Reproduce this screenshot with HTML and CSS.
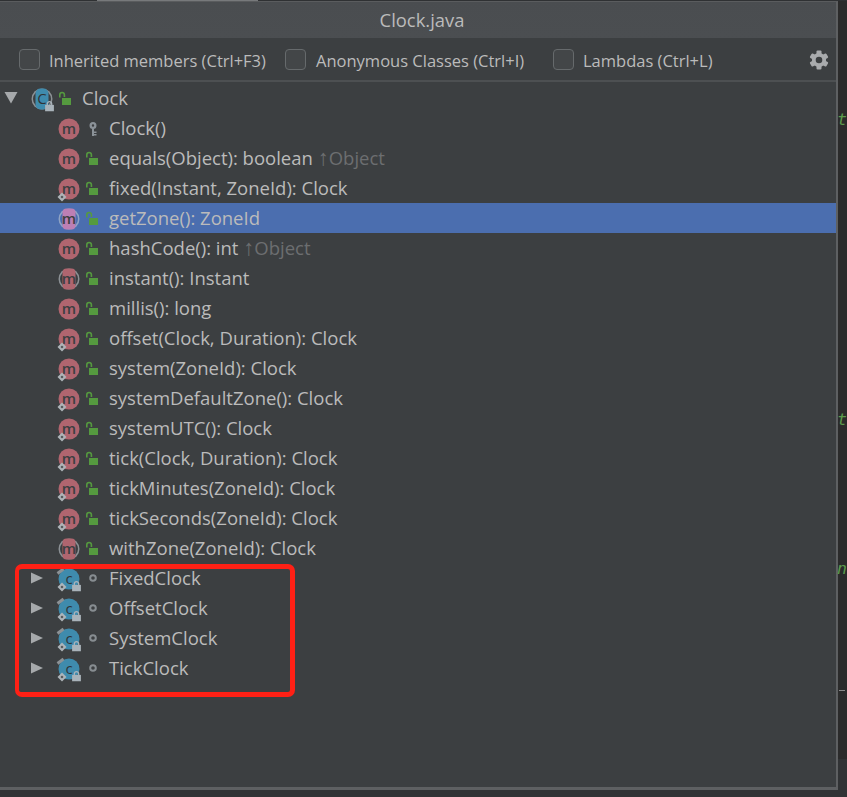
FILE: index.html
```html
<!DOCTYPE html>
<html lang="en">
<head>
<meta charset="utf-8">
<title>Clock.java</title>
<link rel="stylesheet" href="styles.css">
</head>
<body>
<svg class="defs" width="0" height="0" aria-hidden="true">
  <defs>
    <symbol id="diamond" viewBox="0 0 10 10">
      <path d="M5 .5 9.500 5 5 9.500 .5 5Z" fill="#aeb4b8"/>
      <circle cx="5" cy="5" r="1.300" fill="#5a5e60"/>
    </symbol>
    <symbol id="padlock" viewBox="0 0 10 10">
      <rect x="1" y="4" width="8" height="6" fill="#a9b3ba"/>
      <path d="M3 4.500V3a2 2 0 0 1 4 0v1.500" fill="none" stroke="#a9b3ba" stroke-width="1.200"/>
    </symbol>
    <symbol id="m" viewBox="0 0 24 24">
      <circle cx="12" cy="12" r="10.500" fill="#b0656f"/>
      <text x="12" y="17" class="glyph" fill="#3c3f41">m</text>
    </symbol>
    <symbol id="m-static" viewBox="0 0 24 24" overflow="visible">
      <circle cx="12" cy="12" r="10.500" fill="#b0656f"/>
      <text x="12" y="17" class="glyph" fill="#3c3f41">m</text>
      <use href="#diamond" x="0" y="15" width="10" height="10"/>
    </symbol>
    <symbol id="m-abstract" viewBox="0 0 24 24">
      <circle cx="12" cy="12" r="10.500" fill="#8c9195"/>
      <circle cx="12" cy="12" r="9" fill="#3c3f41"/>
      <rect x="5.500" y="1.500" width="13" height="21" rx="4" fill="#b0656f"/>
      <text x="12" y="17" class="glyph" fill="#3c3f41">m</text>
    </symbol>
    <symbol id="m-selected" viewBox="0 0 24 24">
      <circle cx="12" cy="12" r="10.500" fill="#8fa3c4"/>
      <circle cx="12" cy="12" r="9" fill="#4b6eaf"/>
      <rect x="5.500" y="1.500" width="13" height="21" rx="4" fill="#bd7fb4"/>
      <text x="12" y="17" class="glyph" fill="#3c3f41">m</text>
    </symbol>
    <symbol id="c-abstract" viewBox="0 0 24 24" overflow="visible">
      <circle cx="12" cy="12" r="10.500" fill="#8c9195"/>
      <circle cx="12" cy="12" r="9" fill="#3c3f41"/>
      <rect x="5.500" y="1.500" width="13" height="21" rx="5" fill="#3f8bad"/>
      <text x="12" y="17" class="glyph glyph-thin" fill="#2f3436">C</text>
      <use href="#padlock" x="14" y="13.500" width="11" height="11"/>
    </symbol>
    <symbol id="c-nested" viewBox="0 0 24 24" overflow="visible">
      <circle cx="12" cy="12" r="10.500" fill="#3f8bad"/>
      <path d="M.5 6.500 6.500 2" stroke="#8c9195" stroke-width="3" fill="none"/>
      <text x="12" y="16.500" class="glyph glyph-thin" fill="#2f3436">c</text>
      <use href="#diamond" x="0" y="15" width="10" height="10"/>
      <use href="#padlock" x="14" y="13.500" width="11" height="11"/>
    </symbol>
    <symbol id="open" viewBox="0 0 14 14">
      <rect x="4" y="7" width="9" height="7.500" fill="#559a3f"/>
      <path d="M1.800 6.500V3.800a2.300 2.300 0 0 1 4.600 0V6" fill="none" stroke="#559a3f" stroke-width="1.600"/>
    </symbol>
    <symbol id="key" viewBox="0 0 14 14" overflow="visible">
      <path d="M8 1a3.500 3.500 0 1 0 0 7 3.500 3.500 0 0 0 0-7Zm0 2.300a1.200 1.200 0 1 1 0 2.400 1.200 1.200 0 0 1 0-2.400Z" fill="#8b9298" fill-rule="evenodd"/>
      <path d="M7 7h2v8H7zM9 10.500h2.500V12H9zM9 13h2.500v1.500H9z" fill="#8b9298"/>
    </symbol>
    <symbol id="dot" viewBox="0 0 14 14">
      <circle cx="8" cy="7" r="2.800" fill="none" stroke="#878d91" stroke-width="2"/>
    </symbol>
    <symbol id="tri-down" viewBox="0 0 14 12"><path d="M.5 0h13L7 11.500Z" fill="#a6a9ab"/></symbol>
    <symbol id="tri-right" viewBox="0 0 12 12"><path d="M0 .5 12 6 0 11.500Z" fill="#a6a9ab"/></symbol>
  </defs>
</svg>

<div class="topline"><span class="topline-tab"></span></div>
<div class="stage">
  <main class="popup">
    <header class="titlebar">Clock.java</header>
    <div class="toolbar">
      <label class="check check-first"><span class="box"></span><span class="label">Inherited members (Ctrl+F3)</span></label>
      <label class="check check-second"><span class="box"></span><span class="label">Anonymous Classes (Ctrl+I)</span></label>
      <label class="check"><span class="box"></span><span class="label">Lambdas (Ctrl+L)</span></label>
      <svg class="gear" viewBox="0 0 20 20" aria-hidden="true">
        <g fill="#a9abad">
          <rect x="7.500" y=".5" width="5" height="19" rx="1"/>
          <rect x="7.500" y=".5" width="5" height="19" rx="1" transform="rotate(60 10 10)"/>
          <rect x="7.500" y=".5" width="5" height="19" rx="1" transform="rotate(120 10 10)"/>
        </g>
        <circle cx="10" cy="10" r="5.200" fill="#3c3f41" stroke="#a9abad" stroke-width="3.800"/>
      </svg>
    </div>
    <ul class="tree">
      <li class="row row-root"><svg class="tri-d"><use href="#tri-down"/></svg><svg class="ico"><use href="#c-abstract"/></svg><svg class="vis"><use href="#open"/></svg><span>Clock</span></li>
      <li class="row"><svg class="ico"><use href="#m"/></svg><svg class="vis"><use href="#key"/></svg><span>Clock()</span></li>
      <li class="row"><svg class="ico"><use href="#m"/></svg><svg class="vis"><use href="#open"/></svg><span>equals(Object): boolean <em><b>↑</b>Object</em></span></li>
      <li class="row"><svg class="ico"><use href="#m-static"/></svg><svg class="vis"><use href="#open"/></svg><span>fixed(Instant, ZoneId): Clock</span></li>
      <li class="row row-selected"><svg class="ico"><use href="#m-selected"/></svg><svg class="vis"><use href="#open"/></svg><span>getZone(): ZoneId</span></li>
      <li class="row"><svg class="ico"><use href="#m"/></svg><svg class="vis"><use href="#open"/></svg><span>hashCode(): int <em><b>↑</b>Object</em></span></li>
      <li class="row"><svg class="ico"><use href="#m-abstract"/></svg><svg class="vis"><use href="#open"/></svg><span>instant(): Instant</span></li>
      <li class="row"><svg class="ico"><use href="#m"/></svg><svg class="vis"><use href="#open"/></svg><span>millis(): long</span></li>
      <li class="row"><svg class="ico"><use href="#m-static"/></svg><svg class="vis"><use href="#open"/></svg><span>offset(Clock, Duration): Clock</span></li>
      <li class="row"><svg class="ico"><use href="#m-static"/></svg><svg class="vis"><use href="#open"/></svg><span>system(ZoneId): Clock</span></li>
      <li class="row"><svg class="ico"><use href="#m-static"/></svg><svg class="vis"><use href="#open"/></svg><span>systemDefaultZone(): Clock</span></li>
      <li class="row"><svg class="ico"><use href="#m-static"/></svg><svg class="vis"><use href="#open"/></svg><span>systemUTC(): Clock</span></li>
      <li class="row"><svg class="ico"><use href="#m-static"/></svg><svg class="vis"><use href="#open"/></svg><span>tick(Clock, Duration): Clock</span></li>
      <li class="row"><svg class="ico"><use href="#m-static"/></svg><svg class="vis"><use href="#open"/></svg><span>tickMinutes(ZoneId): Clock</span></li>
      <li class="row"><svg class="ico"><use href="#m-static"/></svg><svg class="vis"><use href="#open"/></svg><span>tickSeconds(ZoneId): Clock</span></li>
      <li class="row"><svg class="ico"><use href="#m-abstract"/></svg><svg class="vis"><use href="#open"/></svg><span>withZone(ZoneId): Clock</span></li>
      <li class="row row-nested"><svg class="tri-r"><use href="#tri-right"/></svg><svg class="ico"><use href="#c-nested"/></svg><svg class="vis"><use href="#dot"/></svg><span>FixedClock</span></li>
      <li class="row row-nested"><svg class="tri-r"><use href="#tri-right"/></svg><svg class="ico"><use href="#c-nested"/></svg><svg class="vis"><use href="#dot"/></svg><span>OffsetClock</span></li>
      <li class="row row-nested"><svg class="tri-r"><use href="#tri-right"/></svg><svg class="ico"><use href="#c-nested"/></svg><svg class="vis"><use href="#dot"/></svg><span>SystemClock</span></li>
      <li class="row row-nested"><svg class="tri-r"><use href="#tri-right"/></svg><svg class="ico"><use href="#c-nested"/></svg><svg class="vis"><use href="#dot"/></svg><span>TickClock</span></li>
    </ul>
    <div class="callout"></div>
  </main>
  <aside class="gutter">
    <i class="peek peek-a">t</i>
    <i class="peek peek-b">t</i>
    <i class="peek peek-c">n</i>
    <span class="dash"></span>
    <span class="gutter-foot"></span>
  </aside>
</div>
<div class="bottomline"></div>
</body>
</html>
```
FILE: styles.css
```css
* { box-sizing: border-box; }
html, body { margin: 0; padding: 0; }
body {
  width: 847px;
  height: 797px;
  overflow: hidden;
  background: #2b2b2b;
  font-family: "Open Sans", "Noto Sans", sans-serif;
  color: #bbbbbb;
}
.defs { position: absolute; }
.glyph { font-family: "Open Sans", sans-serif; font-size: 15px; font-weight: 600; text-anchor: middle; }
.glyph-thin { font-weight: 400; }
.topline { height: 1px; background: #2f3133; display: flex; }
.topline-tab { width: 161px; margin-left: 97px; background: #77797b; }
.stage { display: flex; height: 789px; }
.popup {
  position: relative;
  width: 838px;
  height: 789px;
  border-top: 1px solid #5a5c5e;
  border-right: 2px solid #5e6062;
  border-bottom: 3px solid #5e6062;
  background: #3c3f41;
  display: flex;
  flex-direction: column;
}
.titlebar {
  height: 36px;
  display: flex;
  align-items: center;
  justify-content: center;
  padding-left: 8px;
  background: linear-gradient(#4a4d50, #4b4e51);
  font-size: 18.400px;
  line-height: 36px;
}
.toolbar {
  height: 44px;
  display: flex;
  align-items: center;
  padding: 0 7px 0 19px;
  border-bottom: 2px solid #4d5052;
  font-size: 16.500px;
}
.check { display: flex; align-items: center; gap: 9px; white-space: nowrap; }
.check-first { width: 266px; }
.check-second { width: 268px; gap: 10px; }
.label { margin-top: 2px; }
.box {
  flex: none;
  width: 21px;
  height: 21px;
  border: 1.500px solid #666a6c;
  border-radius: 4px;
  background: #434648;
}
.gear { width: 20px; height: 20px; margin: 1px 0 0 auto; }
.tree { list-style: none; margin: 1px 0 0; padding: 0; }
.row {
  height: 30px;
  display: flex;
  align-items: center;
  padding-left: 57px;
  font-size: 18.500px;
  line-height: 25px;
  white-space: nowrap;
}
.row span { margin-top: -2px; }
.row em { font-style: normal; color: #6c6e70; }
.row b { font-family: "Liberation Sans", sans-serif; font-weight: 400; font-size: 22px; line-height: 20px; }
.row-root { padding-left: 4px; }
.row-nested { padding-left: 31px; }
.row-selected { background: #4b6eaf; }
.ico { width: 24px; height: 24px; flex: none; overflow: visible; margin-top: 2px; }
.vis { width: 14px; height: 14px; flex: none; margin: 0 10px 0 4px; overflow: visible; }
.tri-d { width: 14px; height: 12px; flex: none; margin-right: 12px; }
.tri-r { width: 12px; height: 12px; flex: none; margin-right: 14px; }
.callout {
  position: absolute;
  left: 15px;
  top: 562px;
  width: 280px;
  height: 133px;
  border: 5px solid #ff2015;
  border-left-width: 4px;
  border-radius: 7px;
  pointer-events: none;
}
.gutter { position: relative; flex: 1; }
.peek {
  position: absolute;
  left: -1px;
  color: #5c9a4b;
  font-family: "DejaVu Sans Mono", monospace;
  font-size: 16.500px;
  line-height: 20px;
}
.peek-a { top: 109px; }
.peek-b { top: 409px; }
.peek-c { top: 558px; }
.dash { position: absolute; left: 1px; top: 689px; width: 6px; height: 1px; background: #8a8a8a; }
.gutter-foot { position: absolute; left: 0; right: 0; top: 758px; bottom: 0; background: #313335; }
.bottomline { height: 7px; background: #313335; }
```
